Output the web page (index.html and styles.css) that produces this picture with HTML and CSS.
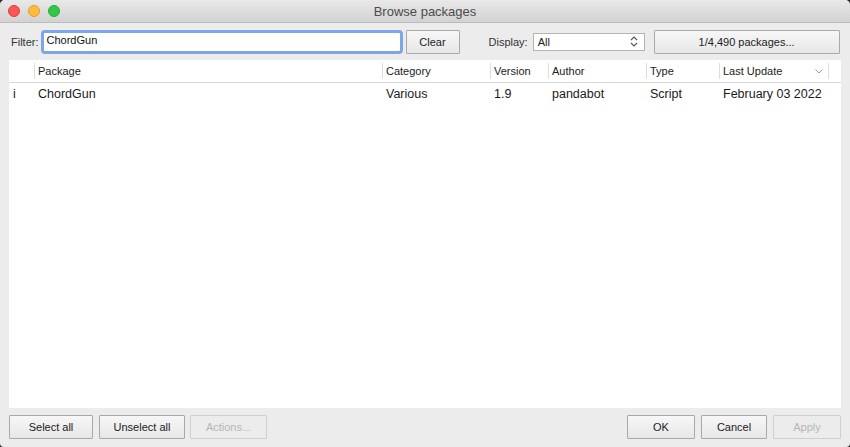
FILE: index.html
```html
<!DOCTYPE html>
<html>
<head>
<meta charset="utf-8">
<link rel="stylesheet" href="styles.css">
</head>
<body>
<div class="window">
  <div class="titlebar">
    <div class="lights">
      <span class="light red"></span>
      <span class="light yellow"></span>
      <span class="light green"></span>
    </div>
    <div class="title">Browse packages</div>
  </div>
  <div class="toolbar">
    <span class="label filter-label">Filter:</span>
    <div class="input focus"><span>ChordGun</span></div>
    <button class="btn clear">Clear</button>
    <span class="label display-label">Display:</span>
    <div class="select"><span>All</span>
      <svg class="updown" width="8" height="11" viewBox="0 0 8 11"><path d="M1 4 L4 1 L7 4 M1 7 L4 10 L7 7" fill="none" stroke="#555" stroke-width="1.1"/></svg>
    </div>
    <button class="btn count">1/4,490 packages...</button>
  </div>
  <div class="table">
    <div class="row head">
      <div class="c c0"></div>
      <div class="c c1 sep">Package</div>
      <div class="c c2 sep">Category</div>
      <div class="c c3 sep">Version</div>
      <div class="c c4 sep">Author</div>
      <div class="c c5 sep">Type</div>
      <div class="c c6 sep">Last Update
        <svg class="sort" width="8" height="5" viewBox="0 0 8 5"><path d="M0.5 0.5 L4 4 L7.5 0.5" fill="none" stroke="#9a9a9a" stroke-width="1"/></svg>
      </div>
      <div class="c c7 sep"></div>
    </div>
    <div class="row body">
      <div class="c c0">i</div>
      <div class="c c1">ChordGun</div>
      <div class="c c2">Various</div>
      <div class="c c3">1.9</div>
      <div class="c c4">pandabot</div>
      <div class="c c5">Script</div>
      <div class="c c6">February 03 2022</div>
    </div>
  </div>
  <div class="footer">
    <div class="group">
      <button class="btn sel">Select all</button>
      <button class="btn unsel">Unselect all</button>
      <button class="btn actions" disabled>Actions...</button>
    </div>
    <div class="group">
      <button class="btn ok">OK</button>
      <button class="btn cancel">Cancel</button>
      <button class="btn apply" disabled>Apply</button>
    </div>
  </div>
</div>
</body>
</html>
```

FILE: styles.css
```css
html, body {
  margin: 0;
  padding: 0;
  background: #2b2b2b;
}
body {
  width: 850px;
  height: 447px;
  overflow: hidden;
  font-family: "Liberation Sans", Arial, sans-serif;
  color: #222;
}
.window {
  width: 850px;
  height: 447px;
  background: #ececec;
  border-radius: 5px 5px 4px 4px;
  overflow: hidden;
  display: flex;
  flex-direction: column;
}
.titlebar {
  height: 22px;
  flex: none;
  background: linear-gradient(#e9e9e9, #d2d2d2);
  border-bottom: 1px solid #bcbcbc;
  position: relative;
  display: flex;
  align-items: center;
  justify-content: center;
}
.lights {
  position: absolute;
  left: 8px;
  top: 5px;
  display: flex;
  gap: 8px;
}
.light {
  width: 12px;
  height: 12px;
  border-radius: 50%;
  box-sizing: border-box;
}
.red { background: #fc5753; border: 1px solid #df3d38; }
.yellow { background: #fdbc40; border: 1px solid #de9f25; }
.green { background: #33c748; border: 1px solid #27aa35; }
.title {
  font-size: 13px;
  color: #4c4c4c;
}
.toolbar {
  height: 37px;
  flex: none;
  display: flex;
  align-items: center;
  font-size: 11px;
}
.label { color: #333; }
.filter-label { margin-left: 11px; }
.input {
  width: 362px;
  height: 24px;
  box-sizing: border-box;
  margin-left: 2px;
  background: #fff;
  border: 3px solid #7ba6e9;
  border-radius: 4px;
  padding: 1px 0 0 3px;
  font-size: 11px;
  color: #111;
}
.btn {
  font-family: "Liberation Sans", Arial, sans-serif;
  font-size: 11px;
  color: #222;
  background: linear-gradient(#f7f7f7, #e7e7e7);
  border: 1px solid #a9a9a9;
  border-radius: 1px;
  height: 24px;
  padding: 0;
  box-sizing: border-box;
}
.btn:disabled {
  color: #b6b6b6;
  border-color: #cfcfcf;
  background: #ececec;
}
.clear { width: 54px; margin-left: 3px; }
.display-label { margin-left: 29px; }
.select {
  width: 112px;
  height: 18px;
  box-sizing: border-box;
  margin-left: 5px;
  background: #fff;
  border: 1px solid #b4b4b4;
  display: flex;
  align-items: center;
  justify-content: space-between;
  padding: 0 6px 0 4px;
}
.count { width: 186px; margin-left: 9px; }
.table {
  flex: 1;
  margin: 0 9px;
  background: #fff;
}
.row {
  display: flex;
}
.row.head {
  height: 22px;
  align-items: center;
  border-bottom: 1px solid #d9d9d9;
  font-size: 11px;
  color: #222;
}
.row.body {
  height: 21px;
  align-items: center;
  font-size: 12.5px;
  color: #1a1a1a;
}
.c {
  box-sizing: border-box;
  padding-left: 3px;
  white-space: nowrap;
}
.row.body .c { padding-left: 4px; }
.sep { border-left: 1px solid #dedede; height: 16px; line-height: 16px; }
.c0 { width: 25px; }
.c1 { width: 348px; }
.c2 { width: 108px; }
.c3 { width: 58px; }
.c4 { width: 98px; }
.c5 { width: 73px; }
.c6 { width: 109px; display: flex; align-items: center; justify-content: space-between; padding-right: 5px; }
.c7 { width: 1px; }
.row.body .c6 { display: block; }
.footer {
  height: 39px;
  flex: none;
  box-sizing: border-box;
  display: flex;
  justify-content: space-between;
  align-items: flex-start;
  padding: 7px 9px 0 9px;
}
.group { display: flex; gap: 6px; }
.footer .btn { height: 24px; }
.sel { width: 84px; }
.unsel { width: 86px; }
.actions { width: 77px; margin-left: -1px; }
.ok { width: 68px; }
.cancel { width: 66px; }
.apply { width: 68px; }
```
